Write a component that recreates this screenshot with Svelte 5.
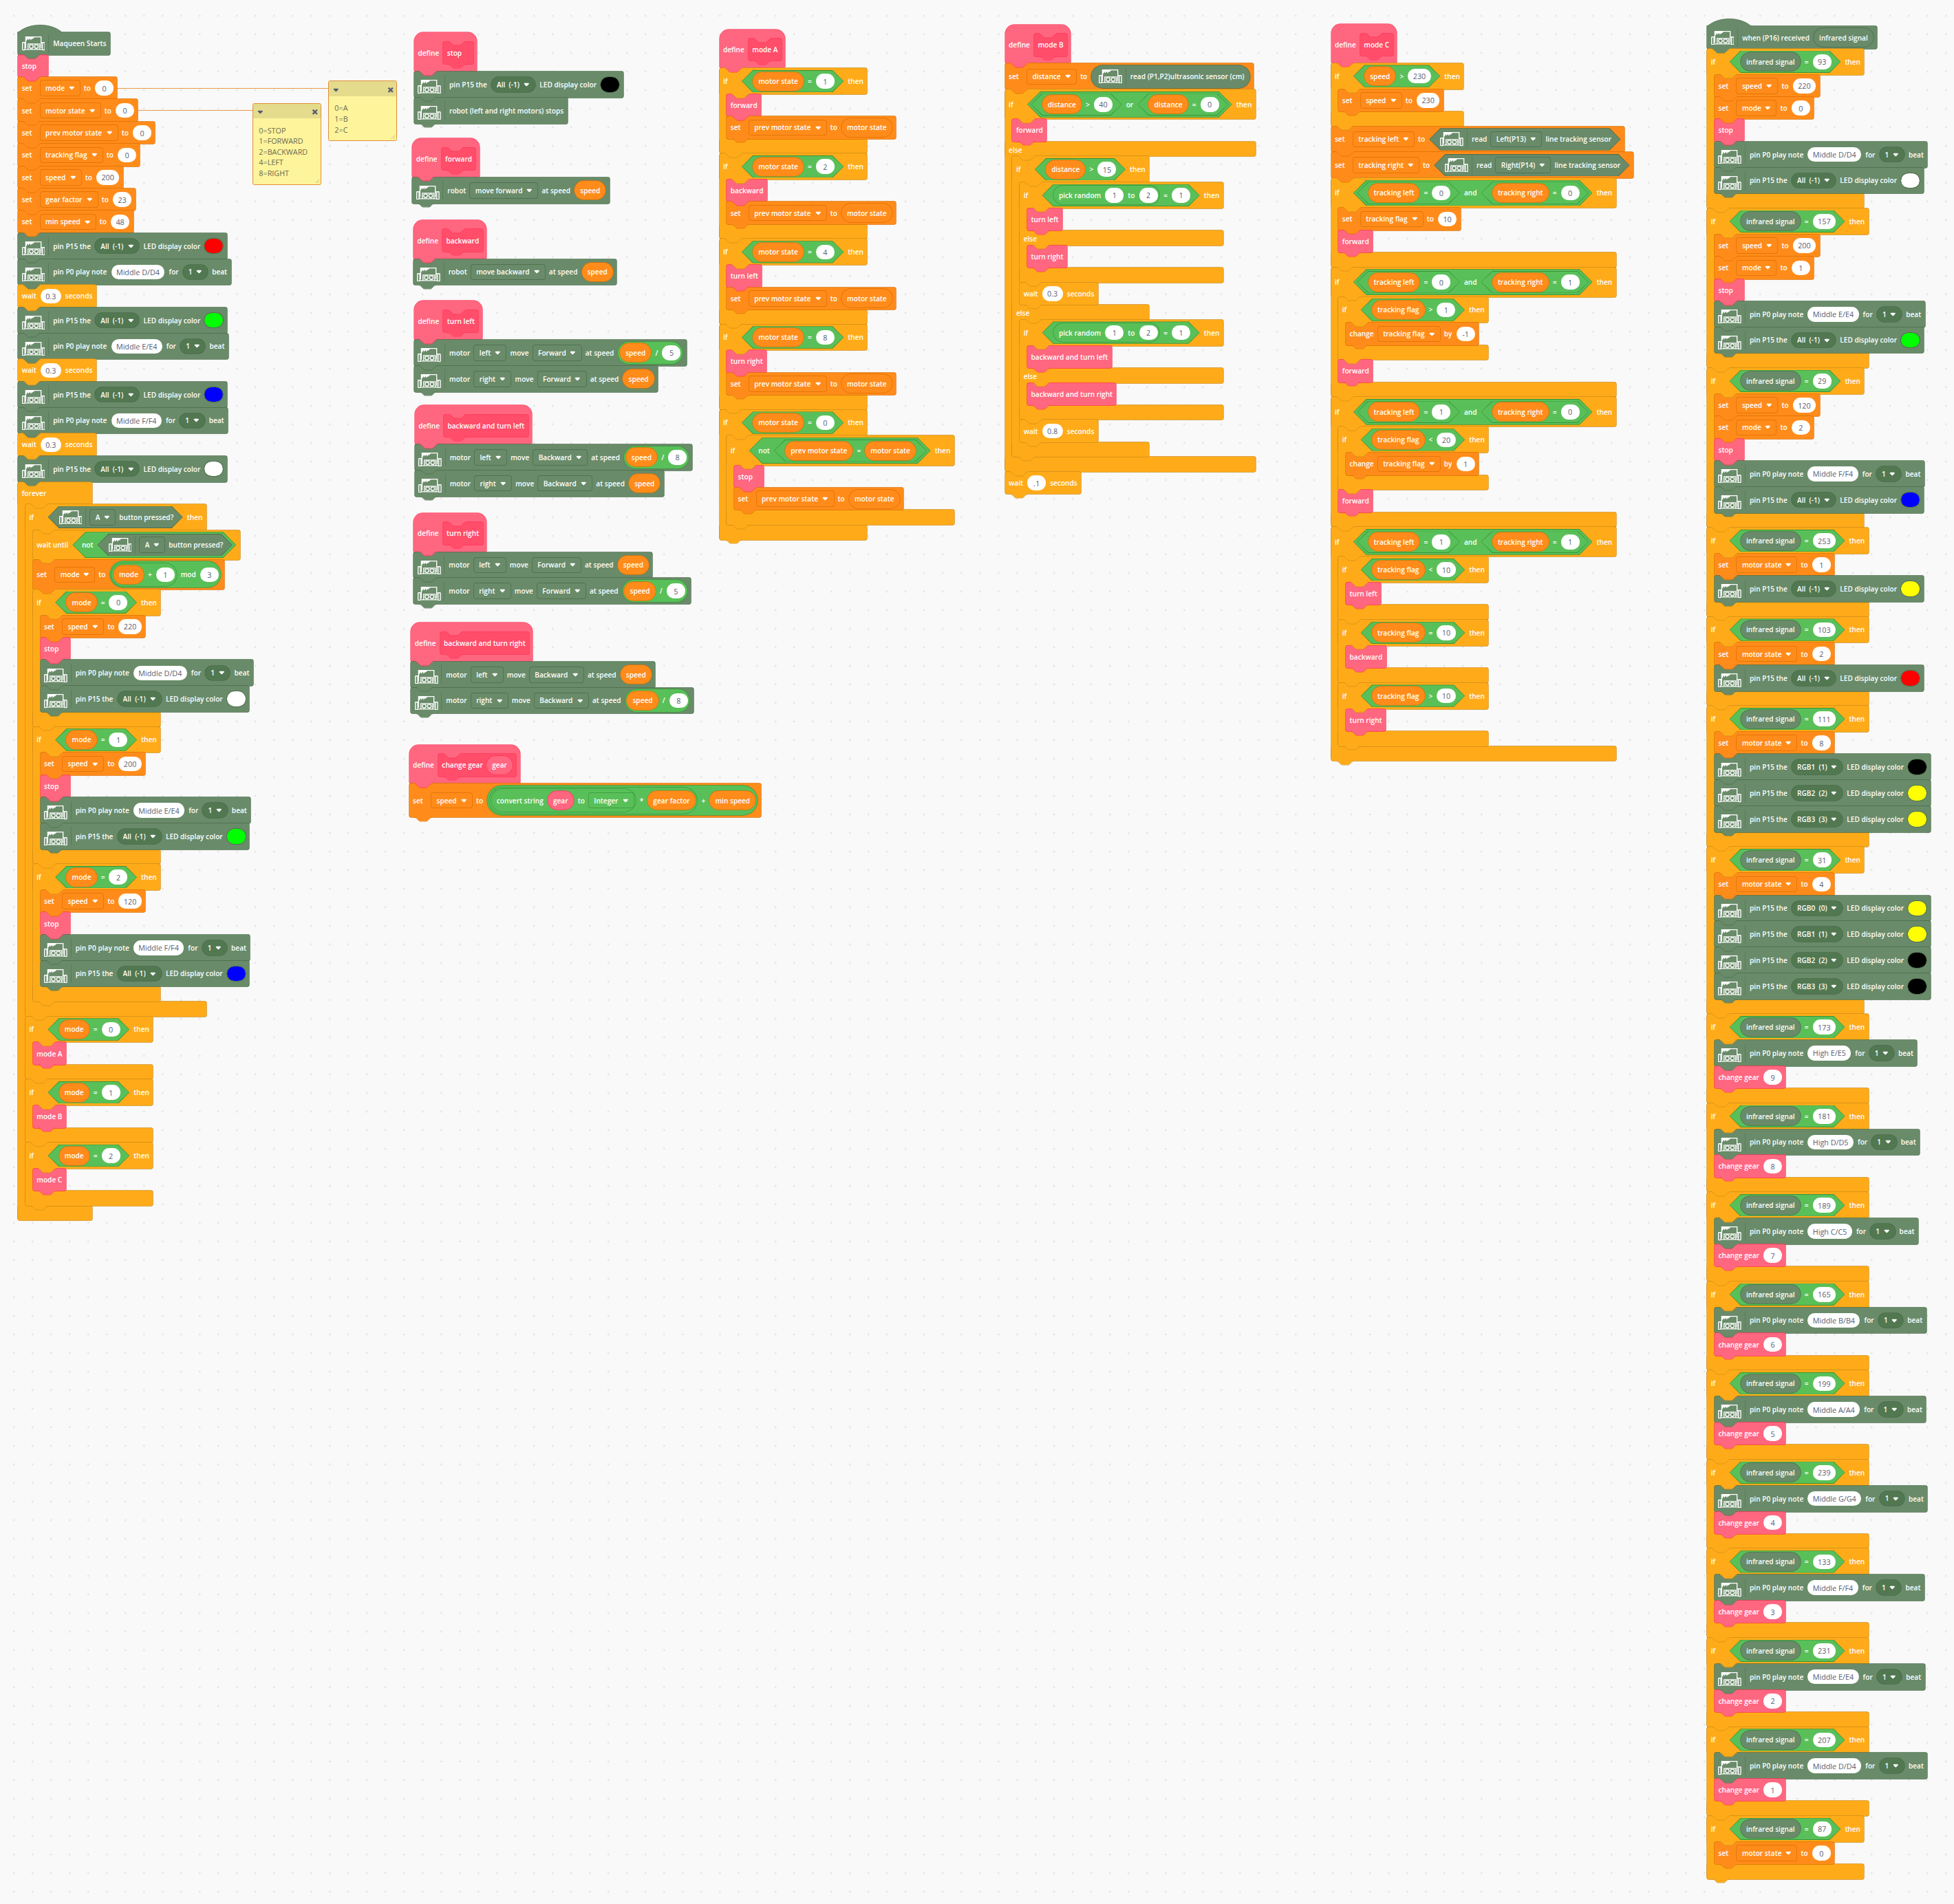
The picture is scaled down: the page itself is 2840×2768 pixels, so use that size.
<script>
  const ICON = { t: 'icon' };
  const num = (value) => ({ t: 'num', value });
  const menu = (value) => ({ t: 'menu', value });
  const pill = (value) => ({ t: 'pill', value });
  const led = (value) => ({ t: 'led', value });
  const ref = (value, c = 'data') => ({ t: 'var', value, c });
  const round = (c, ...parts) => ({ t: 'round', c, parts });
  const hex = (c, ...parts) => ({ t: 'hex', c, parts });

  const block = (c, ...parts) => ({ kind: 'plain', c, parts });
  const call = (...parts) => block('my', ...parts);
  const bot = (...parts) => block('bot', ICON, ...parts);
  const set = (name, value) => block('data', 'set', menu(name), 'to', typeof value === 'object' ? value : num(String(value)));
  const change = (name, value) => block('data', 'change', menu(name), 'by', num(String(value)));
  const wait = (value) => block('control', 'wait', num(value), 'seconds');
  const iff = (cond, body, other) => ({ kind: 'wrap', c: 'control', parts: ['if', cond, 'then'], body, other });
  const define = (name, arg) => ({
    kind: 'define',
    c: 'my',
    parts: ['define', { t: 'proto', parts: arg ? [name, ref(arg, 'my')] : [name] }],
  });
  const cmp = (a, sign, b) => hex('op', typeof a === 'string' ? ref(a) : a, sign, typeof b === 'object' ? b : num(String(b)));

  const stop = call('stop');
  const note = (name) => bot('pin P0 play note', num(name), 'for', pill('1'), 'beat');
  const light = (which, color) => bot('pin P15 the', pill(which.replace(' ', '\u00a0\u00a0')), 'LED display color', led(color));
  const motor = (side, dir, speed) => bot('motor', menu(side), 'move', menu(dir), 'at speed', speed);

  const RED = '#ff0000', LIME = '#00ff00', BLUE = '#0000ff', WHITE = '#ffffff', BLACK = '#000000', YELLOW = '#ffff00';
  const ALL = 'All (-1)';
  const button = () => hex('bot', ICON, menu('A'), 'button pressed?');
  const over = (n) => round('op', ref('speed'), '/', num(n));
  const ir = (code, ...body) => iff(cmp(ref('infrared signal', 'bot'), '=', code), body);
  const modeCase = (n, speed, tone, color) =>
    iff(cmp('mode', '=', n), [set('speed', speed), stop, note(tone), light(ALL, color)]);
  const motorCase = (n, action) => iff(cmp('motor state', '=', n), [call(action), set('prev motor state', ref('motor state'))]);
  const both = (l, r) => hex('op', cmp('tracking left', '=', l), 'and', cmp('tracking right', '=', r));
  const coin = () => cmp(round('op', 'pick random', num('1'), 'to', num('2')), '=', 1);

  const stacks = [
    {
      x: 39, y: 70,
      blocks: [
        { kind: 'hat', c: 'bot', parts: [ICON, 'Maqueen Starts'] },
        stop,
        set('mode', 0),
        set('motor state', 0),
        set('prev motor state', 0),
        set('tracking flag', 0),
        set('speed', 200),
        set('gear factor', 23),
        set('min speed', 48),
        light(ALL, RED), note('Middle D/D4'), wait('0.3'),
        light(ALL, LIME), note('Middle E/E4'), wait('0.3'),
        light(ALL, BLUE), note('Middle F/F4'), wait('0.3'),
        light(ALL, WHITE),
        {
          kind: 'wrap', c: 'control', parts: ['forever'], endless: true,
          body: [
            iff(button(), [
              block('control', 'wait until', hex('op', 'not', button())),
              set('mode', round('op', round('op', ref('mode'), '+', num('1')), 'mod', num('3'))),
              modeCase(0, 220, 'Middle D/D4', WHITE),
              modeCase(1, 200, 'Middle E/E4', LIME),
              modeCase(2, 120, 'Middle F/F4', BLUE),
            ]),
            iff(cmp('mode', '=', 0), [call('mode A')]),
            iff(cmp('mode', '=', 1), [call('mode B')]),
            iff(cmp('mode', '=', 2), [call('mode C')]),
          ],
        },
      ],
    },
    { x: 892, y: 70, blocks: [define('stop'), light(ALL, BLACK), bot('robot (left and right motors) stops')] },
    { x: 888, y: 298, blocks: [define('forward'), bot('robot', menu('move forward'), 'at speed', ref('speed'))] },
    { x: 890, y: 474, blocks: [define('backward'), bot('robot', menu('move backward'), 'at speed', ref('speed'))] },
    { x: 892, y: 648, blocks: [define('turn left'), motor('left', 'Forward', over('5')), motor('right', 'Forward', ref('speed'))] },
    { x: 893, y: 873, blocks: [define('backward and turn left'), motor('left', 'Backward', over('8')), motor('right', 'Backward', ref('speed'))] },
    { x: 891, y: 1105, blocks: [define('turn right'), motor('left', 'Forward', ref('speed')), motor('right', 'Forward', over('5'))] },
    { x: 885, y: 1341, blocks: [define('backward and turn right'), motor('left', 'Backward', ref('speed')), motor('right', 'Backward', over('8'))] },
    {
      x: 881, y: 1604,
      blocks: [
        define('change gear', 'gear'),
        set('speed', round('op',
          round('op', round('op', 'convert string', ref('gear', 'my'), 'to', menu('Integer')), '*', ref('gear factor')),
          '+', ref('min speed'))),
      ],
    },
    {
      x: 1549, y: 63,
      blocks: [
        define('mode A'),
        motorCase(1, 'forward'),
        motorCase(2, 'backward'),
        motorCase(4, 'turn left'),
        motorCase(8, 'turn right'),
        iff(cmp('motor state', '=', 0), [
          iff(hex('op', 'not', cmp('prev motor state', '=', ref('motor state'))), [stop, set('prev motor state', ref('motor state'))]),
        ]),
      ],
    },
    {
      x: 2164, y: 53,
      blocks: [
        define('mode B'),
        set('distance', round('bot', ICON, 'read (P1,P2)ultrasonic sensor (cm)')),
        iff(hex('op', cmp('distance', '>', 40), 'or', cmp('distance', '=', 0)), [call('forward')], [
          iff(cmp('distance', '>', 15),
            [iff(coin(), [call('turn left')], [call('turn right')]), wait('0.3')],
            [iff(coin(), [call('backward and turn left')], [call('backward and turn right')]), wait('0.8')]),
        ]),
        wait('.1'),
      ],
    },
    {
      x: 2866, y: 52,
      blocks: [
        define('mode C'),
        iff(cmp('speed', '>', 230), [set('speed', 230)]),
        set('tracking left', hex('bot', ICON, 'read', menu('Left(P13)'), 'line tracking sensor')),
        set('tracking right', hex('bot', ICON, 'read', menu('Right(P14)'), 'line tracking sensor')),
        iff(both(0, 0), [set('tracking flag', 10), call('forward')]),
        iff(both(0, 1), [iff(cmp('tracking flag', '>', 1), [change('tracking flag', -1)]), call('forward')]),
        iff(both(1, 0), [iff(cmp('tracking flag', '<', 20), [change('tracking flag', 1)]), call('forward')]),
        iff(both(1, 1), [
          iff(cmp('tracking flag', '<', 10), [call('turn left')]),
          iff(cmp('tracking flag', '=', 10), [call('backward')]),
          iff(cmp('tracking flag', '>', 10), [call('turn right')]),
        ]),
      ],
    },
    {
      x: 3676, y: 57,
      blocks: [
        { kind: 'hat', c: 'bot', parts: [ICON, 'when (P16) received', ref('infrared signal', 'bot')] },
        ir(93, set('speed', 220), set('mode', 0), stop, note('Middle D/D4'), light(ALL, WHITE)),
        ir(157, set('speed', 200), set('mode', 1), stop, note('Middle E/E4'), light(ALL, LIME)),
        ir(29, set('speed', 120), set('mode', 2), stop, note('Middle F/F4'), light(ALL, BLUE)),
        ir(253, set('motor state', 1), light(ALL, YELLOW)),
        ir(103, set('motor state', 2), light(ALL, RED)),
        ir(111, set('motor state', 8), light('RGB1 (1)', BLACK), light('RGB2 (2)', YELLOW), light('RGB3 (3)', YELLOW)),
        ir(31, set('motor state', 4), light('RGB0 (0)', YELLOW), light('RGB1 (1)', YELLOW), light('RGB2 (2)', BLACK), light('RGB3 (3)', BLACK)),
        ...[
          [173, 'High E/E5', 9],
          [181, 'High D/D5', 8],
          [189, 'High C/C5', 7],
          [165, 'Middle B/B4', 6],
          [199, 'Middle A/A4', 5],
          [239, 'Middle G/G4', 4],
          [133, 'Middle F/F4', 3],
          [231, 'Middle E/E4', 2],
          [207, 'Middle D/D4', 1],
        ].map(([code, tone, gear]) => ir(code, note(tone), call('change gear', num(String(gear))))),
        ir(87, set('motor state', 0)),
      ],
    },
  ];

  const notes = [
    { x: 544, y: 222, w: 148, h: 177, from: 290, text: '0=STOP\n1=FORWARD\n2=BACKWARD\n4=LEFT\n8=RIGHT' },
    { x: 707, y: 174, w: 148, h: 130, from: 250, text: '0=A\n1=B\n2=C' },
  ];

  const heightOf = (p) => {
    if (typeof p === 'string') return 0;
    if (p.parts) return Math.max(40, 8 + Math.max(...p.parts.map(heightOf)));
    return p.t === 'var' || p.t === 'icon' ? 40 : 32;
  };
</script>

{#snippet chevron()}
  <svg class="chevron" viewBox="0 0 13 9" aria-hidden="true">
    <path d="M6.4 7.8a1.4 1.4 0 0 1-1-.4L1.4 3.5a1.4 1.4 0 0 1 0-2c.6-.6 9.3-.6 9.9 0a1.4 1.4 0 0 1 0 2L7.4 7.4a1.4 1.4 0 0 1-1 .4Z" />
  </svg>
{/snippet}

{#snippet joint(c)}
  <div class="joint {c}">
    <svg viewBox="0 -2 36 11" aria-hidden="true">
      <path class="fill" d="M0 -2V0c2 0 3 1 4 2l4 4c1 1 2 2 4 2h12c2 0 3-1 4-2l4-4c1-1 2-2 4-2V-2Z" />
      <path class="line" d="M0 .5c2 0 3 1 4 2l4 4c1 1 2 2 4 2h12c2 0 3-1 4-2l4-4c1-1 2-2 4-2" />
    </svg>
  </div>
{/snippet}

{#snippet part(p)}
  {#if typeof p === 'string'}
    <span class="text">{p}</span>
  {:else if p.t === 'num'}
    <input class="num" value={p.value} aria-label="value" />
  {:else if p.t === 'menu' || p.t === 'pill'}
    <span class={p.t}>
      <select aria-label={p.value}><option>{p.value}</option></select>
      {@render chevron()}
    </span>
  {:else if p.t === 'led'}
    <input class="led" type="color" value={p.value} aria-label="LED color" />
  {:else if p.t === 'icon'}
    <span class="icon">
      <svg viewBox="0 0 50 30" aria-hidden="true">
        <path class="stroke" d="M8 13V1h33v12M6 13h2v12M43 13h-2v12M6 28h38M13 27V16h25v11" />
        <rect class="stroke" x="1" y="13" width="5" height="16" rx="1" />
        <rect class="stroke" x="44" y="13" width="5" height="16" rx="1" />
        <circle class="stroke" cx="20" cy="21.500" r="4" />
        <circle class="stroke" cx="31" cy="21.500" r="4" />
        <path class="solid" d="M8 1v10l5-7v4l5-4v4l5-4v2l4-5Z" />
      </svg>
    </span>
  {:else if p.t === 'var'}
    <span class="round var {p.c}"><span class="text">{p.value}</span></span>
  {:else if p.t === 'proto'}
    <span class="proto">
      {@render joint('my')}
      {#each p.parts as q}{@render part(q)}{/each}
      <span class="tail">{@render joint('deep')}</span>
    </span>
  {:else}
    <span class="{p.t} {p.c} h{heightOf(p)}">
      {#each p.parts as q}{@render part(q)}{/each}
    </span>
  {/if}
{/snippet}

{#snippet row(b)}
  <div class="row {b.kind} {b.c}">
    {#if b.kind === 'hat'}
      <svg class="dome" viewBox="0 0 98 19" aria-hidden="true">
        <path class="fill" d="M0 19V17c25-22 71-22 96 0v2Z" />
        <path class="line" d="M0 17c25-22 71-22 96 0" />
      </svg>
    {/if}
    {#each b.parts as p}{@render part(p)}{/each}
  </div>
{/snippet}

{#snippet run(list, from)}
  {#each list as b, i}
    {#if i > 0 || from}{@render joint(i > 0 ? list[i - 1].c : from)}{/if}
    {#if b.kind === 'wrap'}
      <div class="wrap {b.c}">
        {@render row(b)}
        <div class="mouth">{@render run(b.body, b.c)}</div>
        {#if b.other}
          <div class="row wrap else {b.c}"><span class="text">else</span></div>
          <div class="mouth">{@render run(b.other, b.c)}</div>
        {/if}
        <div class="arm"></div>
      </div>
    {:else}
      {@render row(b)}
    {/if}
  {/each}
  {#if !list[list.length - 1].endless}{@render joint(list[list.length - 1].c)}{/if}
{/snippet}

<main class="workspace">
  {#each notes as n}
    <div class="thread" style:left="{n.from}px" style:top="{n.y + 15}px" style:width="{n.x - n.from}px"></div>
    <section class="note" style:left="{n.x}px" style:top="{n.y}px" style:width="{n.w}px" style:height="{n.h}px">
      <header>
        <button aria-label="Collapse comment">{@render chevron()}</button>
        <button aria-label="Delete comment">
          <svg class="cross" viewBox="0 0 12 12" aria-hidden="true"><path d="M2 2l8 8M10 2l-8 8" /></svg>
        </button>
      </header>
      <textarea aria-label="Comment" spellcheck="false" value={n.text}></textarea>
      <svg class="grip" viewBox="0 0 10 10" aria-hidden="true"><path d="M1 9l8-8M6 9l3-3" /></svg>
    </section>
  {/each}
  {#each stacks as s}
    <div class="stack" style:left="{s.x}px" style:top="{s.y}px">
      {@render run(s.blocks, null)}
    </div>
  {/each}
</main>

<style>
  :global(body) {
    background: #f9f9f9;
  }
  .workspace {
    zoom: 0.675;
    position: relative;
    min-height: 4100px;
    overflow: hidden;
    font: 600 15px/24px 'Open Sans', 'Noto Sans', sans-serif;
    color: #fff;
    background: radial-gradient(circle, #e0e0e0 0 2px, transparent 2px) 10px 14px / 40px 40px #f9f9f9;
  }

  .control { --fill: #ffab19; --edge: #cf8b17; }
  .data { --fill: #ff8c1a; --edge: #db6e00; }
  .my { --fill: #ff6680; --edge: #ff3355; }
  .deep { --fill: #ff4d6a; --edge: #ff3355; }
  .op { --fill: #59c059; --edge: #389438; }
  .bot { --fill: #698b69; --edge: #486b48; --well: #527852; }

  .fill { fill: var(--fill); }
  .line { fill: none; stroke: var(--edge); }

  .stack {
    position: absolute;
    isolation: isolate;
    display: flex;
    flex-direction: column;
    align-items: flex-start;
  }

  .row {
    position: relative;
    box-sizing: border-box;
    display: flex;
    align-items: center;
    gap: 9px;
    width: max-content;
    min-width: 64px;
    min-height: 48px;
    padding: 4px 8px;
    border-radius: 4px;
    background: var(--fill);
    box-shadow: 0 0 0 1px var(--edge);
    white-space: nowrap;
  }
  .row:not(.define) > .text:first-child {
    min-width: 31px;
  }
  .row.plain:has(> .icon) {
    min-height: 56px;
  }
  .row.hat {
    border-radius: 0 4px 4px 4px;
  }
  .dome {
    position: absolute;
    left: 0;
    top: -17px;
    width: 98px;
    height: 19px;
    overflow: visible;
  }
  .row.define {
    padding: 20px 8px 16px;
    border-radius: 20px 20px 4px 4px;
    box-shadow: 0 0 0 1px #ff4d6a;
  }
  .proto {
    position: relative;
    box-sizing: border-box;
    display: flex;
    align-items: center;
    gap: 8px;
    min-width: 64px;
    height: 48px;
    padding: 4px 8px;
    border-radius: 4px;
    background: #ff4d6a;
    box-shadow: 0 0 0 1px #ff3355;
  }
  .proto > :global(.joint) {
    position: absolute;
    left: 0;
    top: 0;
  }
  .tail {
    position: absolute;
    left: 0;
    bottom: 0;
  }

  .wrap:not(.row) {
    position: relative;
    isolation: isolate;
    width: max-content;
    min-width: 160px;
  }
  .wrap:not(.row)::before {
    content: '';
    position: absolute;
    z-index: 0;
    left: 0;
    top: 4px;
    bottom: 4px;
    width: 18px;
    background: var(--fill);
    box-shadow: -1px 0 var(--edge);
  }
  .row.wrap {
    position: static;
    width: auto;
    min-width: 160px;
  }
  .row.wrap > :global(*) {
    position: relative;
    z-index: 1;
  }
  .row.else {
    min-height: 32px;
    height: 32px;
    padding: 8px 8px 4px;
  }
  .mouth {
    position: relative;
    z-index: 1;
    display: flex;
    flex-direction: column;
    align-items: flex-start;
    width: 0;
    margin-left: 16px;
  }
  .arm {
    height: 32px;
    border-radius: 4px;
    background: var(--fill);
    box-shadow: 0 0 0 1px var(--edge);
  }

  .joint {
    position: relative;
    z-index: 2;
    width: 0;
    height: 0;
  }
  .joint svg {
    position: absolute;
    left: 12px;
    top: -2px;
    width: 36px;
    height: 11px;
    overflow: visible;
  }

  .round,
  .hex {
    position: relative;
    box-sizing: border-box;
    display: flex;
    align-items: center;
    gap: 9px;
    min-height: 40px;
    padding: 4px;
  }
  .round {
    border-radius: 40px;
    background: var(--fill);
    box-shadow: 0 0 0 1px var(--edge);
  }
  .round > .text:first-child { margin-left: 8px; }
  .round > .text:last-child { margin-right: 8px; }
  .round > .icon:first-child { margin-left: 12px; }

  .hex {
    --cut: 24px;
    z-index: 0;
    isolation: isolate;
    padding: 4px 20px;
    background: var(--edge);
    clip-path: polygon(var(--cut) 0, calc(100% - var(--cut)) 0, 100% 50%, calc(100% - var(--cut)) 100%, var(--cut) 100%, 0 50%);
  }
  .hex::before {
    content: '';
    position: absolute;
    z-index: -1;
    inset: 1px;
    background: var(--fill);
    clip-path: polygon(var(--cut) 0, calc(100% - var(--cut)) 0, 100% 50%, calc(100% - var(--cut)) 100%, var(--cut) 100%, 0 50%);
  }
  .hex.h40 { --cut: 20px; }
  .hex.h48 { --cut: 24px; }
  .hex.h56 { --cut: 28px; }
  .hex > .round:first-child,
  .hex > .icon:first-child { margin-left: 4px; }
  .hex > .round:last-child { margin-right: 4px; }
  .hex > .hex:first-child { margin-left: -12px; }
  .hex > .hex:last-child { margin-right: -12px; }

  .num {
    box-sizing: border-box;
    field-sizing: content;
    min-width: 40px;
    height: 32px;
    padding: 0 11px;
    border: 0;
    border-radius: 16px;
    background: #fff;
    color: #575e75;
    font: 400 16px/24px 'Open Sans', 'Noto Sans', sans-serif;
    text-align: center;
  }
  .menu,
  .pill {
    box-sizing: border-box;
    display: flex;
    align-items: center;
    gap: 8px;
    height: 32px;
    padding: 0 11px;
    border-radius: 4px;
    background: var(--well, transparent);
    box-shadow: 0 0 0 1px var(--edge);
  }
  .menu {
    background: transparent;
  }
  .pill {
    padding: 0 12px;
    border-radius: 16px;
  }
  select {
    appearance: none;
    padding: 0;
    border: 0;
    background: transparent;
    color: inherit;
    font: inherit;
  }
  option {
    color: #575e75;
  }
  .chevron {
    width: 13px;
    height: 9px;
    fill: #fff;
  }
  .led {
    appearance: none;
    box-sizing: border-box;
    width: 40px;
    height: 32px;
    padding: 0;
    border: 0;
    border-radius: 16px;
    overflow: hidden;
    background: transparent;
    box-shadow: 0 0 0 1px var(--edge);
  }
  .led::-webkit-color-swatch-wrapper {
    padding: 0;
  }
  .led::-webkit-color-swatch {
    border: 0;
    border-radius: 16px;
  }

  .icon {
    display: flex;
    align-items: center;
    height: 40px;
    padding-right: 7px;
    border-right: 1px solid #5a7c5a;
  }
  .icon svg {
    width: 50px;
    height: 30px;
  }
  .plain > .icon svg {
    margin-top: 10px;
  }
  .stroke {
    fill: none;
    stroke: #fff;
    stroke-width: 2;
  }
  .solid {
    fill: #fff;
  }

  .thread {
    position: absolute;
    height: 2px;
    background: #ea9a4c;
  }
  .note {
    position: absolute;
    box-sizing: border-box;
    display: flex;
    flex-direction: column;
    overflow: hidden;
    border: 1px solid #e08f35;
    border-radius: 4px;
    background: #fef49c;
    color: #575e75;
  }
  .note header {
    display: flex;
    justify-content: space-between;
    align-items: center;
    flex: none;
    height: 32px;
    padding: 4px 4px 0 6px;
    box-sizing: border-box;
    background: #e4db8c;
  }
  .note button {
    display: flex;
    padding: 2px;
    border: 0;
    background: none;
  }
  .note .chevron {
    fill: #575e75;
  }
  .cross {
    width: 14px;
    height: 14px;
    stroke: #575e75;
    stroke-width: 3;
  }
  .note textarea {
    flex: 1;
    padding: 14px 12px 0;
    border: 0;
    outline: 0;
    resize: none;
    overflow: hidden;
    background: none;
    color: #6b6a50;
    font: 400 16px/23px 'Open Sans', 'Noto Sans', sans-serif;
  }
  .grip {
    position: absolute;
    right: 2px;
    bottom: 2px;
    width: 10px;
    height: 10px;
    stroke: #a59f6a;
    fill: none;
  }
</style>
